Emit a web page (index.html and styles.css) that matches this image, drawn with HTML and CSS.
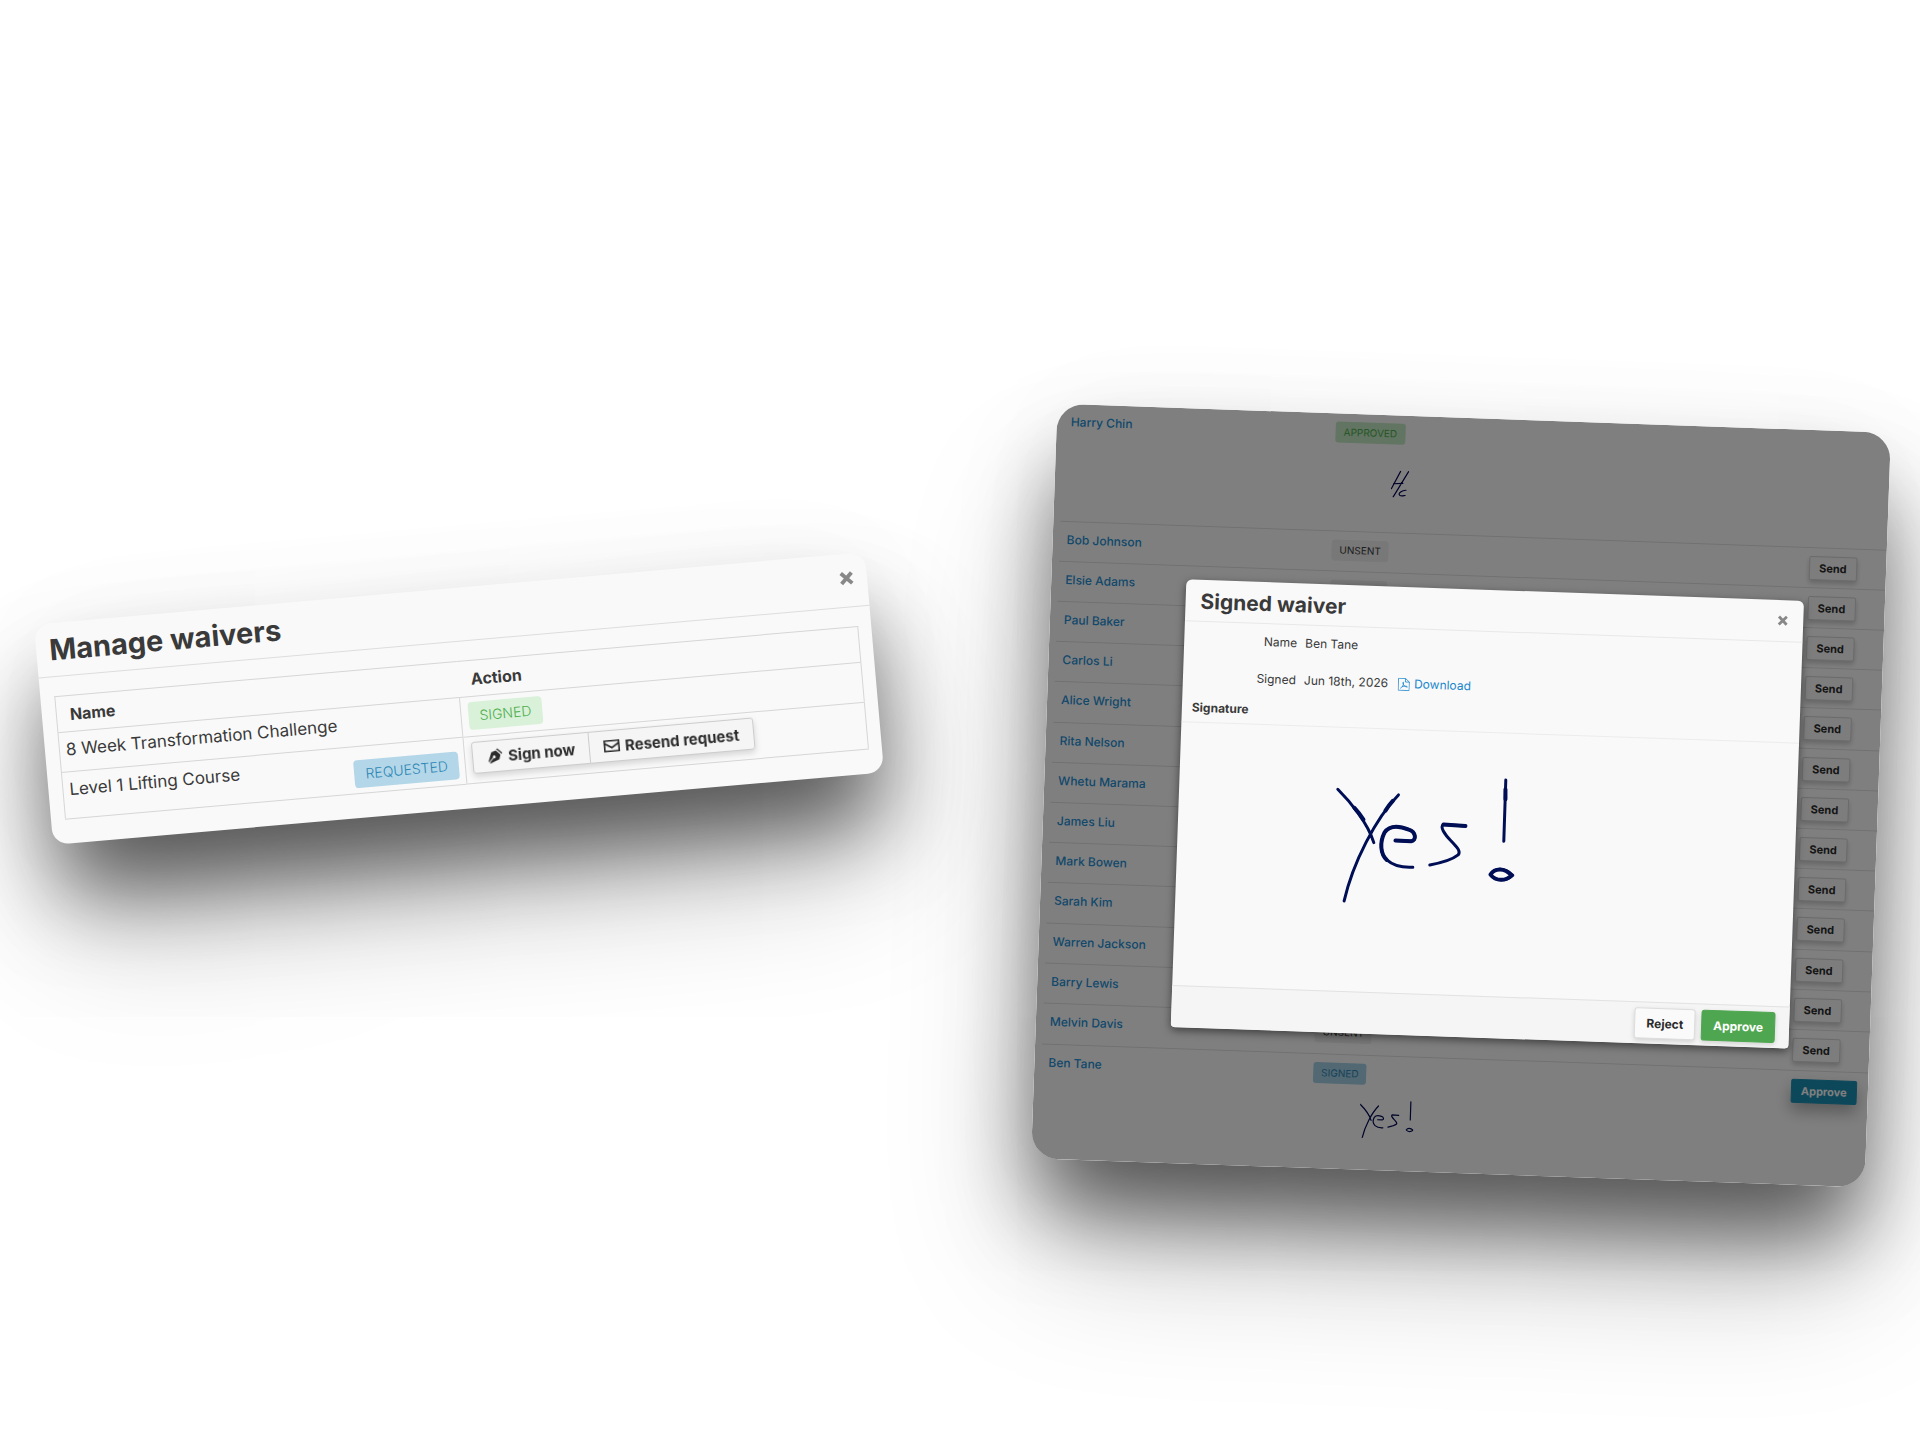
FILE: index.html
```html
<!DOCTYPE html>
<html lang="en">
<head>
<meta charset="utf-8">
<title>Waivers</title>
<link rel="stylesheet" href="styles.css">
</head>
<body>
<main class="stage">
  <section class="card manage" aria-labelledby="manage-title">
    <header class="manage-head">
      <h2 class="manage-title" id="manage-title">Manage waivers</h2>
      <button class="close" type="button" aria-label="Close"><svg width="15" height="15" viewBox="0 0 14 14"><path d="M2 2L12 12M12 2L2 12" stroke="#888" stroke-width="3.600"/></svg></button>
    </header>
    <table class="waivers">
      <thead><tr><th class="col-name">Name</th><th>Action</th></tr></thead>
      <tbody>
        <tr><td>8 Week Transformation Challenge</td><td><span class="badge green">SIGNED</span></td></tr>
        <tr class="tall">
          <td><div class="entry"><span>Level 1 Lifting Course</span><span class="badge blue">REQUESTED</span></div></td>
          <td><div class="group">
            <button class="btn" type="button"><svg width="16" height="16" viewBox="0 0 16 16" fill="#2b2b2b"><path d="M9 2.600L13.400 7L12 11.600L3 15L2.200 14.200L6.400 9.900A1.400 1.400 0 1 0 5.800 9.300L1.600 13.600L1 13L4.400 4z"/><path d="M9.500 1.200L10.600.4L15.400 5.200L14.600 6.300z"/></svg>Sign now</button>
            <button class="btn" type="button"><svg width="16" height="16" viewBox="0 0 16 16" fill="none" stroke="#2b2b2b" stroke-width="1.600"><path d="M.8 2.800H15.200V13.200H.8zM1.200 5.500L8 9.800L14.800 5.500"/></svg>Resend request</button>
          </div></td>
        </tr>
      </tbody>
    </table>
  </section>

  <section class="card members">
    <table class="roster">
      <colgroup><col class="c-name"><col><col class="c-act"></colgroup>
      <tbody>
        <tr class="first"><td><a href="#">Harry Chin</a></td><td><span class="tag green">APPROVED</span><svg class="sig-hc" width="18" height="27" viewBox="0 0 54 81" fill="none" stroke="#000050" stroke-width="3.500" stroke-linecap="round"><path d="M28 2L2 55M52 2L8 80M8 40L36 38M46 58C36 58 20 68 28 74C32 77 38 75 44 74"/></svg></td><td></td></tr>
        <tr><td><a href="#">Bob Johnson</a></td><td><span class="tag">UNSENT</span></td><td><button class="send" type="button">Send</button></td></tr>
        <tr><td><a href="#">Elsie Adams</a></td><td><span class="tag">UNSENT</span></td><td><button class="send" type="button">Send</button></td></tr>
        <tr><td><a href="#">Paul Baker</a></td><td><span class="tag">UNSENT</span></td><td><button class="send" type="button">Send</button></td></tr>
        <tr><td><a href="#">Carlos Li</a></td><td><span class="tag">UNSENT</span></td><td><button class="send" type="button">Send</button></td></tr>
        <tr><td><a href="#">Alice Wright</a></td><td><span class="tag">UNSENT</span></td><td><button class="send" type="button">Send</button></td></tr>
        <tr><td><a href="#">Rita Nelson</a></td><td><span class="tag">UNSENT</span></td><td><button class="send" type="button">Send</button></td></tr>
        <tr><td><a href="#">Whetu Marama</a></td><td><span class="tag">UNSENT</span></td><td><button class="send" type="button">Send</button></td></tr>
        <tr><td><a href="#">James Liu</a></td><td><span class="tag">UNSENT</span></td><td><button class="send" type="button">Send</button></td></tr>
        <tr><td><a href="#">Mark Bowen</a></td><td><span class="tag">UNSENT</span></td><td><button class="send" type="button">Send</button></td></tr>
        <tr><td><a href="#">Sarah Kim</a></td><td><span class="tag">UNSENT</span></td><td><button class="send" type="button">Send</button></td></tr>
        <tr><td><a href="#">Warren Jackson</a></td><td><span class="tag">UNSENT</span></td><td><button class="send" type="button">Send</button></td></tr>
        <tr><td><a href="#">Barry Lewis</a></td><td><span class="tag">UNSENT</span></td><td><button class="send" type="button">Send</button></td></tr>
        <tr><td><a href="#">Melvin Davis</a></td><td><span class="tag">UNSENT</span></td><td><button class="send" type="button">Send</button></td></tr>
        <tr class="last"><td><a href="#">Ben Tane</a></td><td><span class="tag blue">SIGNED</span><svg class="sig-yes" width="54" height="38" viewBox="110 115 536 378" fill="none" stroke="#000a55" stroke-width="12" stroke-linecap="round" stroke-linejoin="round"><use href="#yes"/></svg></td><td><button class="send primary" type="button">Approve</button></td></tr>
      </tbody>
    </table>

    <div class="overlay">
      <div class="modal" role="dialog" aria-labelledby="signed-title">
        <header class="modal-head">
          <h2 class="modal-title" id="signed-title">Signed waiver</h2>
          <button class="close" type="button" aria-label="Close"><svg width="11" height="11" viewBox="0 0 14 14"><path d="M2 2L12 12M12 2L2 12" stroke="#888" stroke-width="3.600"/></svg></button>
        </header>
        <dl class="facts">
          <dt>Name</dt><dd>Ben Tane</dd>
          <dt>Signed</dt><dd>Jun 18th, 2026 <a class="download" href="#"><svg width="12" height="13" viewBox="0 0 12 13" fill="none" stroke="#1b87cc" stroke-width=".8"><path d="M1 .5H7.500L11.500 4V12.500H.5V.5zM7.500 .5V4H11.500"/><path d="M2.500 10.500C4.500 9.500 6 7 5.600 4.600C5.500 3.800 4.700 4.300 5 5.200C5.600 7.500 7.500 9 9.500 9C10 8.200 7 7.600 4.200 8.900"/></svg>Download</a></dd>
        </dl>
        <h3 class="sub">Signature</h3>
        <div class="pad">
          <svg width="280" height="200" viewBox="0 0 840 600" fill="none" stroke="#000f55" stroke-width="9" stroke-linecap="round" stroke-linejoin="round">
            <g id="yes" transform="rotate(-2 420 300)">
              <path d="M115 150C150 185 205 250 223 310M297 167C230 235 160 370 134 485"/>
              <path d="M288 304L335 306C352 303 350 278 328 271C300 260 270 258 255 280C240 310 243 345 262 362C280 378 305 386 340 384"/>
              <path d="M498 260L432 256C420 262 435 285 455 305C470 322 486 335 476 347C455 364 425 371 391 377"/>
              <path d="M619 122L613 306"/>
              <path d="M640 408C615 382 585 386 573 406C590 428 620 425 640 408z"/>
            </g>
            <g class="thick" transform="rotate(-2 420 300)">
              <path d="M165 206Q180 222 192 241M280 185Q268 198 258 214M618 150L618 180"/>
              <path d="M636 408C615 384 585 386 573 406C590 428 620 425 636 408z"/>
              <path d="M288 304L335 306C352 303 350 278 328 271C300 260 270 258 255 280C240 310 243 345 262 362M498 260L432 256"/>
            </g>
          </svg>
        </div>
        <footer class="modal-foot">
          <button class="act" type="button">Reject</button>
          <button class="act approve" type="button">Approve</button>
        </footer>
      </div>
    </div>
  </section>
</main>
</body>
</html>
```
FILE: styles.css
```css
* { box-sizing: border-box; }
body { margin: 0; background: #fff; color: #3a3a3a; font-family: Inter, "Liberation Sans", sans-serif; overflow-x: hidden; }
h2, h3, dl, dd { margin: 0; }
a { color: #1b87cc; text-decoration: none; }
button { font-family: inherit; font-weight: 700; cursor: pointer; }
svg { display: block; flex: none; }

.stage { display: grid; grid-template-columns: 1fr 1fr; align-items: start; gap: 168px; padding: 418px 42px 266px; }
.card {
  position: relative;
  background: #f9f9f9;
  box-shadow: 0 58px 84px -8px rgba(0, 0, 0, .56), 0 90px 150px -10px rgba(0, 0, 0, .26), 0 0 110px rgba(0, 0, 0, .03);
}
.close { padding: 0; border: 0; background: none; }

.manage { margin-top: 170px; padding-bottom: 24px; border-radius: 16px; transform: rotate(-5deg); }
.manage-head { display: flex; justify-content: space-between; align-items: center; height: 54px; padding: 0 13px; border-bottom: 1px solid #ddd; }
.manage-head .close { padding-bottom: 4px; }
.manage-title { font-size: 29px; line-height: 36px; font-weight: 700; }
.waivers { width: calc(100% - 27px); margin: 19px 13px 0 14px; border-collapse: collapse; table-layout: fixed; border: 1px solid #d6d6d6; font-size: 17px; line-height: 24px; }
.waivers tr { height: 40px; border-bottom: 1px solid #d6d6d6; }
.waivers thead tr { height: 36px; }
.waivers .tall { height: 47px; }
.waivers th { padding: 0 13px; text-align: left; font-size: 16px; font-weight: 700; }
.waivers td { padding: 5px 6px; vertical-align: top; }
.waivers td + td { padding-left: 7px; border-left: 1px solid #d6d6d6; }
.col-name { width: 50%; }
.entry { display: flex; justify-content: space-between; }
.entry .badge { margin-top: 8px; }
.badge { display: block; width: fit-content; padding: 0 11px; border-radius: 4px; font-size: 14px; line-height: 28px; font-weight: 300; }
.green { background: #d9f0d9; color: #4cae4c; }
.blue { background: #b3d7e8; color: #2e86b5; }
.group { display: flex; filter: drop-shadow(0 3px 3px rgba(0, 0, 0, .15)); }
.btn { display: flex; align-items: center; gap: 5px; height: 32px; padding: 0 14px; border: 1px solid #ccc; border-radius: 3px 0 0 3px; background: #f5f5f5; color: #2b2b2b; font-size: 15px; }
.btn + .btn { margin-left: -1px; border-radius: 0 3px 3px 0; }

.members { border-radius: 27px; background: #fff; overflow: hidden; transform: rotate(2deg); }
.roster { width: calc(100% - 7px); height: 755px; margin-left: 7px; border-collapse: collapse; table-layout: fixed; font-size: 12px; line-height: 20px; }
.roster td { padding: 8px 8px 7px; vertical-align: top; border-bottom: 1px solid #e2e2e2; }
.roster td:first-child { padding-left: 7px; }
.roster .first { height: 117px; }
.roster .last { height: 115px; }
.roster .last td { border-bottom: 0; }
.roster a { color: #2490d6; font-weight: 500; }
.c-name { width: 264px; }
.c-act { width: 85px; }
.tag { display: block; width: fit-content; padding: 0 8px; border-radius: 3px; background: #f0f0f0; font-size: 10px; line-height: 21px; }
.tag.green { background: #c5e8c5; color: #4cae4c; }
.tag.blue { background: #a5d0e6; color: #2e86b5; }
.sig-hc { margin: 26px 0 0 57px; }
.sig-yes { margin: 15px 0 0 48px; }
.send { display: block; height: 24px; padding: 0 9px; border: 1px solid #d6d6d6; border-radius: 2px; background: #fbfbfb; box-shadow: 0 3px 5px rgba(0, 0, 0, .2); color: #2b2b2b; font-size: 11px; }
.send.primary { border-color: #1b91b5; background: #1b91b5; box-shadow: 0 8px 16px rgba(0, 0, 0, .3); color: #fff; }

.overlay { position: absolute; inset: 0; padding: 171px 81px 0 135px; background: rgba(0, 0, 0, .5); }
.modal { border-radius: 6px 6px 4px 4px; background: #f9f9f9; overflow: hidden; box-shadow: 0 3px 9px rgba(0, 0, 0, .5); }
.modal-head { display: flex; justify-content: space-between; align-items: center; height: 42px; padding: 0 15px; border-bottom: 1px solid #e8e8e8; }
.modal-title { padding-top: 3px; font-size: 21px; line-height: 28px; font-weight: 700; }
.facts { display: grid; grid-template-columns: 113px 1fr; gap: 17px 8px; padding: 8px 0; font-size: 12px; line-height: 20px; }
.facts dt { text-align: right; }
.facts dd { display: flex; gap: 10px; }
.download { display: flex; align-items: center; gap: 4px; }
.sub { padding: 3px 10px 4px; border-bottom: 1px solid #ececec; font-size: 12px; line-height: 20px; font-weight: 700; }
.pad { height: 263px; padding: 8px 0 0 122px; }
.thick { stroke-width: 12px; }
.modal-foot { display: flex; justify-content: flex-end; align-items: center; gap: 6px; height: 42px; padding: 0 14px; border-top: 1px solid #e2e2e2; background: #f5f5f5; }
.act { height: 31px; padding: 0 11px; border: 1px solid #ddd; border-radius: 3px; background: #fafafa; box-shadow: 0 2px 5px rgba(0, 0, 0, .15); color: #2b2b2b; font-size: 12px; }
.act.approve { border-color: #4fa650; background: #4fa650; color: #fff; }
```
